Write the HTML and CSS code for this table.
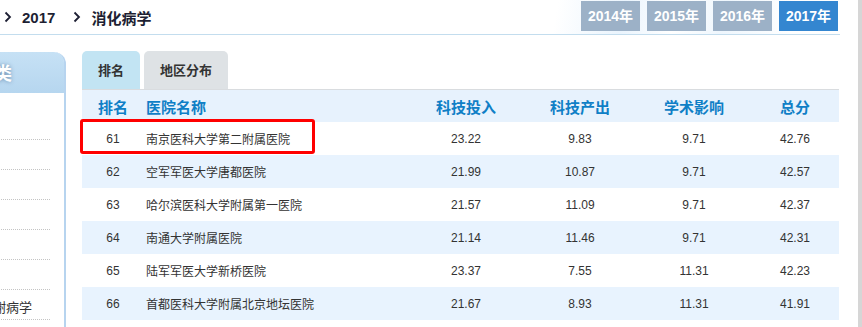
FILE: index.html
```html
<!DOCTYPE html>
<html lang="zh-CN">
<head>
  <meta charset="UTF-8">
  <meta name="viewport" content="width=device-width, initial-scale=1.0">
  <title>消化病学 2017</title>
  <link rel="stylesheet" href="styles.css">
</head>
<body>
  <div class="page">
    <div class="topbar">
      <div class="crumbs">
        <svg class="chev" width="8" height="12" viewBox="0 0 8 12"><polyline points="1.5,1.5 6,6 1.5,10.5" fill="none" stroke="#1d1f33" stroke-width="1.8"/></svg>
        <span class="crumb">2017</span>
        <svg class="chev" width="8" height="12" viewBox="0 0 8 12"><polyline points="1.5,1.5 6,6 1.5,10.5" fill="none" stroke="#1d1f33" stroke-width="1.8"/></svg>
        <span class="crumb">消化病学</span>
      </div>
      <div class="years">
        <a class="year">2014年</a>
        <a class="year">2015年</a>
        <a class="year">2016年</a>
        <a class="year active">2017年</a>
      </div>
    </div>

    <div class="content">
      <div class="sidebar">
        <div class="side-title">学科分类</div>
        <ul class="side-list">
          <li>呼吸病学</li>
          <li>心血管病学</li>
          <li>血液病学</li>
          <li>肾脏病学</li>
          <li>消化病学</li>
          <li>感染病学</li>
          <li>内分泌与代谢病学</li>
        </ul>
      </div>

      <div class="main">
        <div class="tabs">
          <div class="tab current">排名</div>
          <div class="tab">地区分布</div>
        </div>
        <table class="rank">
          <thead>
            <tr>
              <th class="c-rank">排名</th>
              <th class="c-name">医院名称</th>
              <th class="c-num">科技投入</th>
              <th class="c-num">科技产出</th>
              <th class="c-num">学术影响</th>
              <th class="c-total">总分</th>
            </tr>
          </thead>
          <tbody>
            <tr><td class="c-rank">61</td><td class="c-name">南京医科大学第二附属医院</td><td>23.22</td><td>9.83</td><td>9.71</td><td>42.76</td></tr>
            <tr><td class="c-rank">62</td><td class="c-name">空军军医大学唐都医院</td><td>21.99</td><td>10.87</td><td>9.71</td><td>42.57</td></tr>
            <tr><td class="c-rank">63</td><td class="c-name">哈尔滨医科大学附属第一医院</td><td>21.57</td><td>11.09</td><td>9.71</td><td>42.37</td></tr>
            <tr><td class="c-rank">64</td><td class="c-name">南通大学附属医院</td><td>21.14</td><td>11.46</td><td>9.71</td><td>42.31</td></tr>
            <tr><td class="c-rank">65</td><td class="c-name">陆军军医大学新桥医院</td><td>23.37</td><td>7.55</td><td>11.31</td><td>42.23</td></tr>
            <tr><td class="c-rank">66</td><td class="c-name">首都医科大学附属北京地坛医院</td><td>21.67</td><td>8.93</td><td>11.31</td><td>41.91</td></tr>
          </tbody>
        </table>
        <div class="highlight"></div>
      </div>
    </div>
  </div>
</body>
</html>
```

FILE: styles.css
```css
html, body {
  margin: 0;
  padding: 0;
  background: white;
  overflow: hidden;
}
body {
  font-family: "Liberation Sans", "Noto Sans CJK SC", sans-serif;
  color: #333;
}
.page {
  width: 858px;
  height: 327px;
  border-right: 4px solid #d6d6d6;
  overflow: hidden;
}
.topbar {
  width: 840px;
  height: 34px;
  border-bottom: 1px solid #c3ddee;
  display: flex;
  justify-content: space-between;
  align-items: flex-start;
  background: linear-gradient(100deg, #fff 66%, #eaf4fd 74%, #fff 80%, #eef6fd 86%, #fff 94%);
}
.crumbs {
  display: flex;
  align-items: center;
  height: 34px;
  padding-left: 4px;
}
.chev {
  display: block;
}
.crumb {
  font-size: 15px;
  font-weight: bold;
  color: #1d1f33;
  margin-left: 10px;
  margin-right: 18px;
}
.years {
  display: flex;
  gap: 7px;
  padding-top: 1px;
  padding-right: 2px;
}
.year {
  display: block;
  width: 59px;
  height: 30px;
  line-height: 30px;
  text-align: center;
  background: #9cb1c7;
  color: white;
  font-size: 14px;
  font-weight: bold;
}
.year.active {
  background: #3486d0;
}
.content {
  display: flex;
  align-items: flex-start;
  gap: 16px;
}
.sidebar {
  width: 178px;
  margin-left: -114px;
  margin-top: 17px;
  height: 300px;
  border-right: 2px solid #b7d4ef;
  border-top-right-radius: 12px;
}
.side-title {
  height: 41px;
  line-height: 41px;
  padding-left: 54px;
  background: linear-gradient(#c6e1f5, #b6d6ef);
  border-top-right-radius: 10px;
  color: white;
  font-size: 18px;
  font-weight: bold;
  font-family: "Noto Sans CJK SC", sans-serif;
  text-shadow: 0 0 4px #6c8fb0;
}
.side-list {
  list-style: none;
  margin: 0;
  padding: 17px 14px 0 42px;
}
.side-list li {
  height: 29px;
  line-height: 29px;
  border-bottom: 1px dotted #c4c4c4;
  font-size: 13px;
  color: #333;
  white-space: nowrap;
  font-family: "Noto Sans CJK SC", sans-serif;
}
.side-list li:last-child {
  line-height: 33px;
}
.main {
  position: relative;
  width: 757px;
  margin-top: 16px;
}
.tabs {
  display: flex;
  gap: 4px;
  height: 38px;
  border-bottom: 1px solid #d9dcdf;
}
.tab {
  padding: 0 16px;
  line-height: 38px;
  font-size: 13px;
  font-weight: bold;
  color: #333;
  background: #dee2e5;
  border-radius: 5px 5px 0 0;
  font-family: "Noto Sans CJK SC", sans-serif;
}
.tab.current {
  background: #c2e4f3;
}
.rank {
  width: 757px;
  border-collapse: collapse;
  table-layout: fixed;
}
.rank th {
  height: 32px;
  padding: 0;
  background: #e7f2fd;
  color: #0f7fc6;
  font-size: 15px;
  font-weight: bold;
  font-family: "Noto Sans CJK SC", sans-serif;
  text-align: center;
}
.rank td {
  height: 33px;
  padding: 0;
  font-size: 12px;
  color: #333;
  text-align: center;
}
.rank tbody tr:nth-child(even) td {
  background: #e8f3fe;
}
.rank .c-rank {
  width: 62px;
}
.rank .c-name {
  width: 263px;
  text-align: left;
  padding-left: 2px;
  font-family: "Noto Sans CJK SC", sans-serif;
}
.rank .c-num {
  width: 114px;
}
.rank td.c-name {
  font-size: 12px;
}
.highlight {
  position: absolute;
  left: -2px;
  top: 68px;
  width: 229px;
  height: 29px;
  border: 3px solid #f00;
  border-radius: 3px;
}
```
